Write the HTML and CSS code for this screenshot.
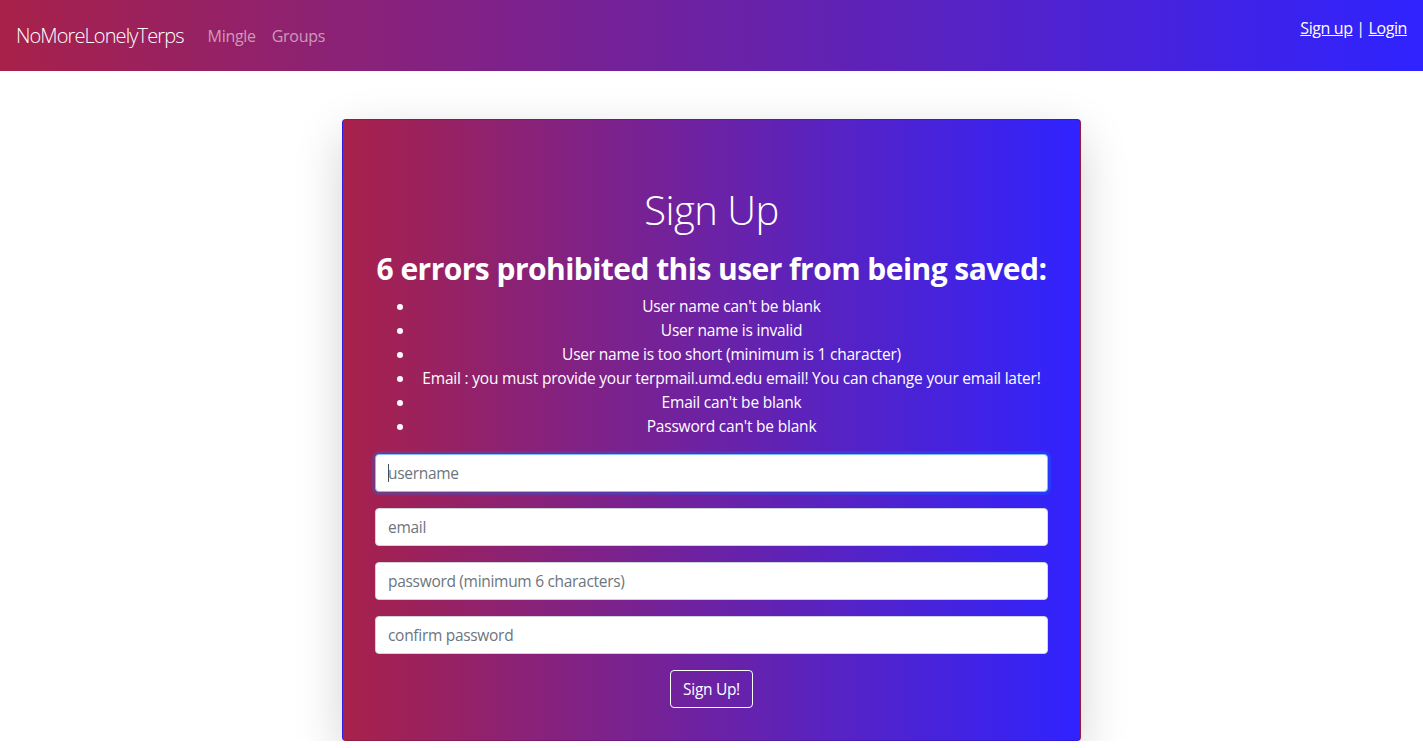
FILE: index.html
```html
<!DOCTYPE html>
<html lang="en">
<head>
<meta charset="utf-8">
<title>NoMoreLonelyTerps - Sign Up</title>
<link rel="stylesheet" href="styles.css">
</head>
<body>
<nav class="navbar">
  <div class="nav-left">
    <a class="brand" href="#">NoMoreLonelyTerps</a>
    <a class="nav-link" href="#">Mingle</a>
    <a class="nav-link" href="#">Groups</a>
  </div>
  <div class="nav-right">
    <a href="#">Sign up</a> | <a href="#">Login</a>
  </div>
</nav>
<main class="main">
  <div class="card">
    <h1 class="title">Sign Up</h1>
    <h2 class="errors-title">6 errors prohibited this user from being saved:</h2>
    <ul class="errors">
      <li>User name can't be blank</li>
      <li>User name is invalid</li>
      <li>User name is too short (minimum is 1 character)</li>
      <li>Email : you must provide your terpmail.umd.edu email! You can change your email later!</li>
      <li>Email can't be blank</li>
      <li>Password can't be blank</li>
    </ul>
    <form class="form">
      <div class="field-wrap">
        <input class="field field-focus" type="text" placeholder="username">
        <span class="caret"></span>
      </div>
      <input class="field" type="text" placeholder="email">
      <input class="field" type="password" placeholder="password (minimum 6 characters)">
      <input class="field" type="password" placeholder="confirm password">
      <div class="actions">
        <button class="btn" type="button">Sign Up!</button>
      </div>
    </form>
  </div>
</main>
</body>
</html>
```
FILE: styles.css
```css
* { box-sizing: border-box; }
html, body { margin: 0; padding: 0; }
body {
  font-family: "Open Sans", "Noto Sans", sans-serif;
  font-size: 16px;
  line-height: 1.5;
  color: #212529;
  background: #fff;
  overflow: hidden;
}
.navbar {
  height: 71px;
  display: flex;
  justify-content: space-between;
  align-items: flex-start;
  padding: 0 16px;
  background: linear-gradient(to right, #a8214a, #2f23ff);
}
.nav-left {
  display: flex;
  align-items: center;
  height: 71px;
}
.brand {
  color: #fff;
  font-size: 20px;
  font-weight: 300;
  text-decoration: none;
  margin-right: 16px;
  letter-spacing: -0.9px;
}
.nav-link {
  color: rgba(255,255,255,.55);
  text-decoration: none;
  padding: 0 8px;
  font-size: 16px;
  letter-spacing: -0.3px;
}
.nav-right {
  color: #fff;
  padding-top: 16px;
  letter-spacing: -0.4px;
}
.nav-right a { color: #fff; text-decoration: underline; }
.main {
  display: flex;
  justify-content: center;
  padding-top: 48px;
}
.card {
  width: 739px;
  padding: 32px;
  border: 1px solid rgba(0,0,0,.125);
  border-radius: 4px;
  background: linear-gradient(to right, #a8214a, #2f23ff);
  box-shadow: 0 16px 48px rgba(0,0,0,.175);
  color: #fff;
  text-align: center;
}
.title {
  margin: 34px 0 16px;
  font-size: 40px;
  font-weight: 300;
  line-height: 48px;
  letter-spacing: -0.5px;
}
.errors-title {
  margin: 0 0 6px;
  font-size: 30px;
  font-weight: 700;
  line-height: 38px;
  letter-spacing: -0.55px;
  white-space: nowrap;
}
.errors {
  margin: 0 0 16px;
  padding-left: 40px;
  font-size: 15.5px;
  line-height: 24px;
  letter-spacing: -0.2px;
}
.form {
  display: flex;
  flex-direction: column;
  gap: 16px;
}
.field-wrap {
  position: relative;
}
.caret {
  position: absolute;
  left: 13px;
  top: 10px;
  width: 1px;
  height: 18px;
  background: #495057;
}
.field {
  display: block;
  width: 100%;
  height: 38px;
  padding: 6px 12px;
  font-family: inherit;
  font-size: 15.5px;
  color: #495057;
  background: #fff;
  border: 1px solid #ced4da;
  border-radius: 4px;
  outline: none;
  letter-spacing: -0.3px;
}
.field::placeholder { color: #6c757d; }
.field-focus {
  border-color: #80bdff;
  box-shadow: 0 0 0 3px rgba(0,123,255,.25);
}
.actions {
  display: flex;
  justify-content: center;
}
.btn {
  height: 38px;
  padding: 6px 12px;
  font-family: inherit;
  font-size: 15.5px;
  color: #fff;
  background: transparent;
  border: 1px solid #fff;
  border-radius: 4px;
  letter-spacing: -0.3px;
  cursor: pointer;
}
```
